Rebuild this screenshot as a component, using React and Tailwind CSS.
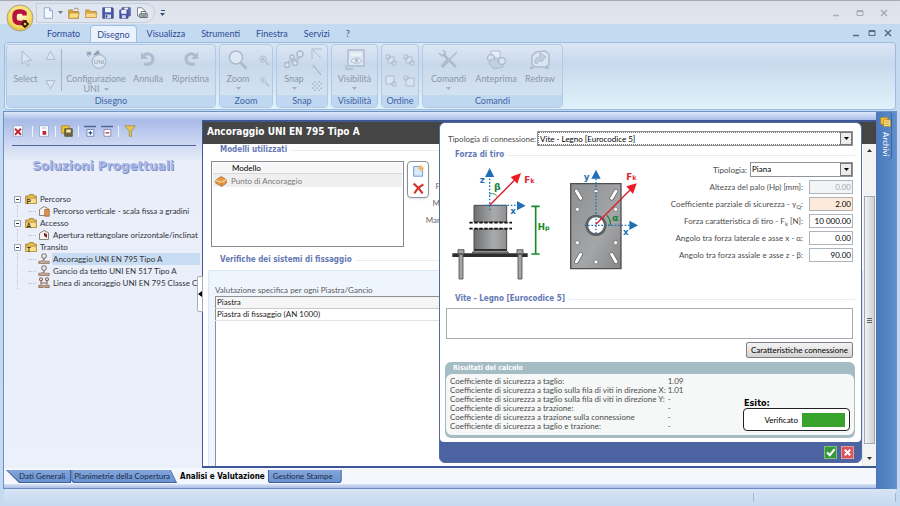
import { useState } from 'react';
import clsx from 'clsx';

const MENU = ['Formato', 'Disegno', 'Visualizza', 'Strumenti', 'Finestra', 'Servizi', '?'];

const TREE = [
    { name: 'Percorso', letter: 'P', items: [{ name: 'Percorso verticale - scala fissa a gradini', icon: 'stairs' }] },
    { name: 'Accesso', letter: 'A', items: [{ name: 'Apertura rettangolare orizzontale/inclinat', icon: 'hatch' }] },
    {
        name: 'Transito',
        letter: 'T',
        items: [
            { name: 'Ancoraggio UNI EN 795 Tipo A', icon: 'anchor', selected: true },
            { name: 'Gancio da tetto UNI EN 517 Tipo A', icon: 'anchor' },
            { name: 'Linea di ancoraggio UNI EN 795 Classe C', icon: 'line' },
        ],
    },
];

const FIELDS = [
    { id: 'hp', label: 'Altezza del palo (Hp) [mm]:', value: '0.00', disabled: true },
    { id: 'gamma', label: <>Coefficiente parziale di sicurezza - γ<sub>Q</sub>:</>, value: '2.00', highlight: true },
    { id: 'fk', label: <>Forza caratteristica di tiro - F<sub>k</sub> [N]:</>, value: '10 000.00' },
    { id: 'alpha', label: 'Angolo tra forza laterale e asse x - α:', value: '0.00' },
    { id: 'beta', label: 'Angolo tra forza assiale e asse z - β:', value: '90.00' },
];

const RESULTS = [
    ['Coefficiente di sicurezza a taglio:', '1.09'],
    ['Coefficiente di sicurezza a taglio sulla fila di viti in direzione X:', '1.01'],
    ['Coefficiente di sicurezza a taglio sulla fila di viti in direzione Y:', '-'],
    ['Coefficiente di sicurezza a trazione:', '-'],
    ['Coefficiente di sicurezza a trazione sulla connessione', '-'],
    ['Coefficiente di sicurezza a taglio e trazione:', '-'],
];

/* ---------- icons ---------- */

const Svg = ({ size = 12, box = 16, children, className }) => (
    <svg width={size} height={size} viewBox={`0 0 ${box} ${box}`} fill="none" className={clsx('shrink-0', className)} aria-hidden="true">
        {children}
    </svg>
);

const NewDoc = () => (
    <Svg>
        <path d="M3 1h7l4 4v10H3z" fill="#f4f8ff" stroke="#7f97c4" />
        <path d="M10 1v4h4" fill="#c6d6f0" stroke="#7f97c4" />
    </Svg>
);

const OpenFolder = () => (
    <Svg>
        <path d="M1 4h5l1 2h7v9H1z" fill="#d9a83c" stroke="#a67c2c" />
        <path d="M2 8h13l-2 7H1z" fill="#fbdc84" stroke="#b98d33" />
        <path d="M8 3c2-2 5-2 6 1" stroke="#9a7b3a" strokeWidth="1.2" />
    </Svg>
);

const Folder = () => (
    <Svg>
        <path d="M1 4h5l1 2h8v8H1z" fill="#e3ac45" stroke="#ad8130" />
        <path d="M1 8h14v6H1z" fill="#fbd98a" stroke="#c49a45" />
    </Svg>
);

const Save = () => (
    <Svg>
        <path d="M1 1h13l1 1v13H1z" fill="#4a58a8" stroke="#3a4688" />
        <path d="M4 1h8v6H4z" fill="#eef1fb" />
        <path d="M4 10h8v5H4z" fill="#d4daee" />
        <path d="M5 11h2v3H5z" fill="#2a3478" />
    </Svg>
);

const SaveAll = () => (
    <Svg>
        <path d="M4 1h11v11H4z" fill="#6673bb" stroke="#3a4688" />
        <path d="M7 1h5v4H7z" fill="#eef1fb" />
        <path d="M1 4h11v11H1z" fill="#4a58a8" stroke="#3a4688" />
        <path d="M3 4h7v5H3z" fill="#eef1fb" />
        <path d="M4 11h5v4H4z" fill="#d4daee" />
    </Svg>
);

const PrintPreview = () => (
    <Svg>
        <path d="M2 1h6l3 3v8H2z" fill="#fff" stroke="#5b6372" />
        <path d="M5 9h10v5H5z" fill="#c5ccd6" stroke="#434a56" />
        <path d="M7 6h6v3H7z" fill="#fff" stroke="#434a56" />
        <path d="M7 12h6" stroke="#2b7a35" strokeWidth="1.4" />
    </Svg>
);

const G = '#adbbcf';
const L = '#dbe5f1';

const CursorIcon = () => (
    <Svg size={20} box={20}>
        <path d="M6 2v13l3.4-3 2 5 2-1-2-4.700h4.600z" fill={L} stroke={G} />
    </Svg>
);

const UniIcon = () => (
    <svg width="24" height="20" viewBox="0 0 24 20" fill="none" aria-hidden="true">
        <path d="M3 3h4v3H3zM5 8l-2-2M9 6l5-5 3 6" fill="#8d9bb0" stroke={G} />
        <circle cx="15" cy="12.500" r="6.800" fill={L} stroke={G} strokeWidth="1.2" />
        <text x="15" y="15" textAnchor="middle" fontSize="6" fontFamily="Liberation Sans, sans-serif" fill="#8593aa">UNI</text>
    </svg>
);

const UndoIcon = ({ flip }) => (
    <Svg size={20} box={20} className={flip ? '-scale-x-100' : ''}>
        <path d="M5 7c4-4 10-2 10 3s-5 6-9 5" stroke={G} strokeWidth="3" />
        <path d="M3 3v7h7z" fill={G} />
    </Svg>
);

const LensIcon = () => (
    <Svg size={22} box={22}>
        <circle cx="9" cy="8.500" r="6.500" fill="#dfe9f5" stroke={G} strokeWidth="1.600" />
        <path d="M13.500 13.500l6 6" stroke={G} strokeWidth="3" />
    </Svg>
);

const SmallLens = ({ dashed }) => (
    <Svg size={12} box={12}>
        <circle cx="5" cy="5" r="3" stroke={G} strokeDasharray={dashed ? '1.500 1.500' : undefined} />
        <path d="M3.500 5h3M5 3.500v3M7.500 7.500l3.500 3.500" stroke={G} strokeWidth="1.400" />
    </Svg>
);

const SnapIcon = () => (
    <Svg size={22} box={22}>
        <path d="M5 15L9 9l3 4 6-8" stroke={G} strokeWidth="3" />
        <path d="M5 15L9 9l3 4 6-8" stroke={L} />
        <circle cx="4" cy="16" r="2.500" fill={L} stroke={G} strokeWidth="1.500" />
        <circle cx="12" cy="14" r="2.500" fill={L} stroke={G} strokeWidth="1.500" />
        <circle cx="17" cy="5" r="3" fill={L} stroke={G} strokeWidth="1.500" />
        <circle cx="9" cy="8" r="2" fill={L} stroke={G} strokeWidth="1.500" />
    </Svg>
);

const SnapCorner = () => (
    <Svg size={12} box={12}><path d="M1 11V1h10M2 2l8 8" stroke={G} /></Svg>
);
const SnapLine = () => (
    <Svg size={12} box={12}><path d="M2 1l8 10" stroke={G} strokeWidth="1.400" /><path d="M1 3l1 1M10 6l1 1M3 9l1 1" stroke={G} /></Svg>
);
const SnapGrid = () => (
    <Svg size={12} box={12}><path d="M1 3l8 8M1 7l4 4M3 1l8 8M7 1l4 4M3 11l8-8M7 11l4-4M1 9l8-8M1 5l4-4" stroke={G} strokeDasharray="1.500 1" /></Svg>
);

const EyeIcon = () => (
    <Svg size={22} box={22}>
        <path d="M4 1h16v16H4z" fill="#dbe6f2" stroke={G} strokeWidth="1.400" />
        <path d="M7 4h10v3H7z" fill="#e8f0f8" />
        <path d="M7 12c3-4 8-4 11 0-3 3-8 3-11 0z" fill="#e8f0f8" stroke={G} />
        <circle cx="12.500" cy="11.500" r="1.800" fill={G} />
        <path d="M2 16v4h7" stroke={G} strokeWidth="1.400" />
    </Svg>
);

const OrderIcon = ({ kind }) => (
    <Svg size={12} box={12}>
        {kind === 0 && <path d="M7 7h4v4H7zM1 1h4v4H1zM3 3h6v6H3z" fill={L} stroke={G} />}
        {kind === 1 && <path d="M3 3h6v6H3zM1 1h4v4H1zM7 7h4v4H7z" fill={L} stroke={G} />}
        {kind === 2 && <path d="M7 7h4v4H7zM1 1h8v8H1z" fill={L} stroke={G} />}
        {kind === 3 && <path d="M1 1h4v4H1zM3 3h8v8H3z" fill={L} stroke={G} />}
    </Svg>
);

const ToolsIcon = () => (
    <Svg size={22} box={22}>
        <path d="M5 5l13 13" stroke={G} strokeWidth="2.500" />
        <path d="M1 4l3 3 3-1 0-3-2-2" stroke={G} strokeWidth="1.500" />
        <path d="M19 3L10 12" stroke={G} strokeWidth="1.500" />
        <path d="M10 11l-6 7" stroke={G} strokeWidth="3.500" />
    </Svg>
);

const PreviewIcon = () => (
    <Svg size={22} box={22}>
        <path d="M6 2h9v7H6z" fill="#e8eef6" stroke={G} />
        <circle cx="6" cy="9" r="3.500" fill={L} stroke={G} strokeWidth="1.500" />
        <path d="M6 10l12 2v6l-9 2-5-5z" fill="#c4d0e0" stroke={G} />
        <circle cx="17" cy="12" r="3.500" fill={L} stroke={G} strokeWidth="1.500" />
    </Svg>
);

const RedrawIcon = () => (
    <Svg size={22} box={22}>
        <path d="M7 3l9-1 4 3v11l-4 2H5l-2-3V7z" fill={L} stroke={G} strokeWidth="1.500" />
        <path d="M6 14c0-5 3-6 5-6V4l6 4-5 5v-2c-2 0-3 1-4 4z" fill="#c4d0e0" stroke={G} />
        <path d="M1 19h3M16 19h4" stroke={G} strokeWidth="2" />
    </Svg>
);

const FolderNode = ({ letter }) => (
    <Svg size={12}>
        <path d="M1 4h4l1-2h5l1 2h3v10H1z" fill="#e7bc4f" stroke="#94702a" />
        <path d="M1 7h14v7H1z" fill="#fbe38f" stroke="#b28c39" />
        <text x="5" y="14" textAnchor="middle" fontSize="9" fontWeight="700" fontFamily="Liberation Sans, sans-serif" fill="#4b350c">{letter}</text>
    </Svg>
);

const NodeIcon = ({ kind }) => {
    if (kind === 'anchor') {
        return (
            <Svg size={12}>
                <circle cx="8" cy="4" r="3" stroke="#8b807d" strokeWidth="1.500" />
                <path d="M8 7v3" stroke="#8b807d" strokeWidth="2" />
                <path d="M1 11h3l1-1h3l1 1h6v3H1z" fill="#c9a58d" stroke="#8a7469" />
            </Svg>
        );
    }
    if (kind === 'line') {
        return (
            <Svg size={12}>
                <circle cx="4" cy="3" r="2" stroke="#846052" strokeWidth="1.500" />
                <circle cx="12" cy="3" r="2" stroke="#846052" strokeWidth="1.500" />
                <path d="M4 5v5M12 5v5M4 8h8" stroke="#846052" strokeWidth="1.400" />
                <path d="M1 11h6v3H1zM9 11h6v3H9z" fill="#d0a78e" stroke="#846052" />
            </Svg>
        );
    }
    return (
        <Svg size={12}>
            <path d="M2 6l6-4 6 3v9H2z" fill="#f6f4f2" stroke="#8c7f79" strokeWidth="1.300" />
            {kind === 'stairs'
                ? <path d="M9 6h6v9H9z" fill="#dc9350" stroke="#a2602a" />
                : <path d="M8 5l4 2v5l-4-3z" fill="#7b2420" />}
        </Svg>
    );
};

const Caret = ({ className }) => (
    <svg width="5" height="3" viewBox="0 0 5 3" className={className} aria-hidden="true"><path d="M0 0h5L2.500 3z" fill="currentColor" /></svg>
);

/* ---------- ribbon ---------- */

const RibbonGroup = ({ title, className, children }) => (
    <section className={clsx('flex flex-col rounded-sm border border-[#b0c9e6] bg-linear-to-b from-[#dde7f4] via-[#c9d9ec] via-30% to-[#d6e6f4]', className)}>
        <div className="flex flex-1 items-stretch">{children}</div>
        <h2 className="h-3 bg-[#bfd7f0] text-center text-[9px] leading-3 text-[#3f63a3]">{title}</h2>
    </section>
);

const RibbonButton = ({ icon, label, caret, className }) => (
    <button type="button" className={clsx('flex flex-col items-center pt-1 text-[9px] leading-[10px] text-[#8c97a8]', className)}>
        <span className="flex h-[25px] items-start justify-center">{icon}</span>
        <span className="whitespace-pre-line">{label}{caret === 'inline' && <Caret className="mb-px ml-1 inline text-[#a3afc0]" />}</span>
        {caret === true && <Caret className="mt-[3px] text-[#a3afc0]" />}
    </button>
);

const Ribbon = () => (
    <div className="mx-1 flex h-[68px] shrink-0 gap-[3px] rounded-sm border border-[#9dbbe0] bg-linear-to-b from-[#dbe6f4] via-[#c8d9ed] via-30% to-[#e0f2fa] p-px">
        <RibbonGroup title="Disegno" className="w-[210px]">
            <RibbonButton icon={<CursorIcon />} label="Select" className="w-[37px]" />
            <div className="flex w-3 flex-col items-center justify-between py-[5px]">
                <Svg size={11} box={11}><path d="M5.500 1l4.500 8.500H1z" fill={L} stroke={G} /></Svg>
                <Svg size={11} box={11}><path d="M5.500 10L10 1.500H1z" fill={L} stroke={G} /></Svg>
            </div>
            <div className="my-1 ml-[5px] w-px bg-[#a7b4c6]" />
            <RibbonButton icon={<UniIcon />} label={'Configurazione\nUNI'} caret="inline" className="w-[68px]" />
            <RibbonButton icon={<UndoIcon />} label="Annulla" className="w-9" />
            <RibbonButton icon={<UndoIcon flip />} label="Ripristina" className="w-[49px]" />
        </RibbonGroup>
        <RibbonGroup title="Zoom" className="w-[54px]">
            <RibbonButton icon={<LensIcon />} label="Zoom" caret className="w-9" />
            <div className="flex w-4 flex-col items-center justify-around py-1"><SmallLens /><SmallLens dashed /></div>
        </RibbonGroup>
        <RibbonGroup title="Snap" className="w-[52px]">
            <RibbonButton icon={<SnapIcon />} label="Snap" caret className="w-[34px]" />
            <div className="flex w-3 flex-col items-center justify-between py-[3px]"><SnapCorner /><SnapLine /><SnapGrid /></div>
        </RibbonGroup>
        <RibbonGroup title="Visibilità" className="w-[47px]">
            <RibbonButton icon={<EyeIcon />} label="Visibilità" caret className="w-full" />
        </RibbonGroup>
        <RibbonGroup title="Ordine" className="w-[38px]">
            <div className="grid flex-1 grid-cols-2 place-items-center py-1">
                {[0, 1, 2, 3].map((k) => <OrderIcon key={k} kind={k} />)}
            </div>
        </RibbonGroup>
        <RibbonGroup title="Comandi" className="w-[141px]">
            <RibbonButton icon={<ToolsIcon />} label="Comandi" caret className="w-[51px]" />
            <RibbonButton icon={<PreviewIcon />} label="Anteprima" className="w-11" />
            <RibbonButton icon={<RedrawIcon />} label="Redraw" className="w-11" />
        </RibbonGroup>
    </div>
);

const WindowButtons = ({ className, gap }) => (
    <div className={clsx('flex items-center', gap, className)}>
        <button type="button" aria-label="Riduci"><Svg size={8} box={8}><path d="M1 6.500h6" stroke="currentColor" strokeWidth="1.500" /></Svg></button>
        <button type="button" aria-label="Ripristina finestra"><Svg size={8} box={8}><path d="M1 2h6v4.500H1z" stroke="currentColor" /><path d="M1 2h6" stroke="currentColor" strokeWidth="2" /></Svg></button>
        <button type="button" aria-label="Chiudi"><Svg size={8} box={8}><path d="M1 1l6 6M7 1L1 7" stroke="currentColor" strokeWidth="1.600" /></Svg></button>
    </div>
);

const TopBar = () => (
    <header className="relative shrink-0">
        <div className="flex h-6 items-center justify-between border-t border-[#a3adba] bg-linear-to-b from-[#dde2ea] to-[#e1e6ee] pr-3">
            <div className="ml-9 flex h-5 items-center gap-[5px] rounded-r-full border border-[#c5cedc] bg-[#dfe6f0] pr-[6px] pl-[5px]">
                <button type="button" aria-label="Nuovo" className="flex items-center gap-1 text-[#6b7688]"><NewDoc /><Caret /></button>
                <button type="button" aria-label="Apri"><OpenFolder /></button>
                <button type="button" aria-label="Cartella"><Folder /></button>
                <button type="button" aria-label="Salva"><Save /></button>
                <button type="button" aria-label="Salva tutto"><SaveAll /></button>
                <button type="button" aria-label="Anteprima di stampa"><PrintPreview /></button>
            </div>
            <button type="button" aria-label="Personalizza" className="mr-auto ml-[5px] flex flex-col items-center gap-[2px] text-[#35517f]">
                <span className="h-px w-1 bg-current" /><Caret />
            </button>
            <WindowButtons className="text-[#a4adb9]" gap="gap-4" />
        </div>
        <div className="flex h-[18px] items-end justify-between bg-[#c3daf1] pr-2">
            <nav className="ml-[39px] flex items-end text-[9px] leading-[17px] text-[#2f4c94]">
                {MENU.map((m) => (
                    <a
                        key={m}
                        href="#"
                        className={clsx(
                            'block h-[17px]',
                            m === 'Disegno' ? 'mx-[2px] rounded-t-sm border border-b-0 border-[#9fbde2] bg-[#eaf2fc] px-[6px]' : 'px-2'
                        )}
                    >
                        {m}
                    </a>
                ))}
            </nav>
            <WindowButtons className="h-full text-[#5c6b84]" gap="gap-2" />
        </div>
        <button type="button" aria-label="Menu applicazione" className="absolute top-1 left-[6px]">
            <svg width="28" height="28" viewBox="0 0 28 28" aria-hidden="true">
                <defs>
                    <radialGradient id="orb" cx="0.5" cy="0.4" r="0.6">
                        <stop offset="0" stopColor="#fffbd8" />
                        <stop offset="0.7" stopColor="#f7dc5e" />
                        <stop offset="1" stopColor="#dcb949" />
                    </radialGradient>
                </defs>
                <circle cx="14" cy="14" r="13" fill="url(#orb)" stroke="#a9a48c" />
                <path d="M18.500 11.500V9q-1-1.500-3.500-1.500h-2Q8.500 7.500 8.500 12v2q0 5 5 5h2q3 0 3.500-3" fill="none" stroke="#b5133c" strokeWidth="4.500" />
                <circle cx="19" cy="20" r="2.200" fill="#f2d24c" stroke="#3b1a12" strokeWidth="1.800" />
                <path d="M15 20h2M21 20h2M19 16v2M19 22v2" stroke="#3b1a12" strokeWidth="1.500" />
            </svg>
        </button>
    </header>
);

/* ---------- left panel ---------- */

const Sep = () => <span className="h-[11px] w-px bg-[#f1f5fd]" />;

const Toolbar = () => (
    <div className="ml-[6px] mr-[4px] box-content flex h-[18px] items-center gap-[5px] border-b border-[#4f6494] pb-[5px]">
        <button type="button" aria-label="Elimina" className="mr-[3px]"><Svg><path d="M2 1h12v14H2z" fill="#fff" stroke="#8ea0c4" /><path d="M4 5l8 8M12 5l-8 8" stroke="#c2202c" strokeWidth="2.400" /></Svg></button>
        <Sep />
        <button type="button" aria-label="Nuovo elemento"><Svg><path d="M2 1h12v14H2z" fill="#fff" stroke="#8ea0c4" /><path d="M6 8h5v5H6z" fill="#b92a33" /><path d="M5 4h6" stroke="#8ea0c4" /></Svg></button>
        <Sep />
        <button type="button" aria-label="Archivia"><Svg><path d="M1 1h10v10H1z" fill="#f1c63f" stroke="#a17b1c" /><path d="M5 5h10v10H5z" fill="#6f6746" stroke="#49421f" /><path d="M7 6h6v4H7z" fill="#f7e9a6" /></Svg></button>
        <Sep />
        <button type="button" aria-label="Espandi"><Svg><path d="M0 2h16" stroke="#51659a" strokeWidth="2" /><path d="M4 6h9v9H4z" fill="#fff" stroke="#5a70a8" /><path d="M6 10.500h5M8.500 8v5" stroke="#27408c" strokeWidth="1.400" /></Svg></button>
        <button type="button" aria-label="Comprimi"><Svg><path d="M0 2h16" stroke="#51659a" strokeWidth="2" /><path d="M4 6h9v9H4z" fill="#fff" stroke="#8a6f98" /><path d="M6 10.500h5" stroke="#a02c3c" strokeWidth="1.600" /></Svg></button>
        <Sep />
        <button type="button" aria-label="Filtra"><Svg><path d="M1 1h14L10 8v7H7V8z" fill="#e5c451" stroke="#a08a45" /></Svg></button>
    </div>
);

const SidePanel = () => (
    <aside className="w-[198px] shrink-0 overflow-hidden bg-linear-to-b from-[#a9bbe8] via-[#e9eef9] via-12% to-[#ebf0fa] px-[2px] pt-[2px]">
        <Toolbar />
        <h1 className="mt-3 text-center font-[DejaVu_Sans,sans-serif] text-[12px] leading-4 font-bold text-[#a9b8e6] [text-shadow:1px_1px_0_#7c8cc4]">
            Soluzioni Progettuali
        </h1>
        <ul className="mt-[19px] ml-2 text-[8px] leading-3 text-[#2f333b]">
            {TREE.map((node) => (
                <li key={node.name}>
                    <div className="flex items-center gap-[3px]">
                        <Svg size={7} box={7} className="mr-px"><path d="M.5.5h6v6h-6z" fill="#fff" stroke="#98a3b8" /><path d="M2 3.500h3" stroke="#333" /></Svg>
                        <FolderNode letter={node.letter} />
                        {node.name}
                    </div>
                    <ul className="ml-[3px] border-l border-dotted border-[#b9c1d2]">
                        {node.items.map((it) => (
                            <li key={it.name} className="flex items-center">
                                <span className="mr-[2px] ml-[10px] w-2 border-t border-dotted border-[#b9c1d2]" />
                                <NodeIcon kind={it.icon} />
                                <a href="#" className={clsx('ml-[2px] flex-1 pl-px whitespace-nowrap', it.selected && 'bg-[#c9ddf2]')}>{it.name}</a>
                            </li>
                        ))}
                    </ul>
                </li>
            ))}
        </ul>
    </aside>
);

/* ---------- main document ---------- */

const GroupTitle = ({ children, className }) => (
    <h3 className={clsx('flex items-center gap-1 font-[DejaVu_Sans_Condensed,sans-serif] text-[8px] leading-3 font-bold whitespace-nowrap text-[#6478b4]', className)}>
        {children}
        <span className="h-px flex-1 bg-[#e6ebf4]" />
    </h3>
);

const Document = () => (
    <div className="flex min-h-0 flex-1 flex-col overflow-hidden bg-white text-[8px]">
        <GroupTitle className="ml-[17px]">Modelli utilizzati</GroupTitle>
        <div className="mt-[5px] ml-2 flex items-start gap-[3px]">
            <div className="h-[86px] w-[193px] border border-[#858a92] bg-white p-px">
                <div className="h-[11px] border-b border-[#d8d8d8] bg-[#f7f7f7] pl-[19px] leading-[11px] text-black">Modello</div>
                <div className="flex h-[13px] items-center gap-1 bg-[#efefef] pl-[2px] text-[#7a7a7a]">
                    <Svg><path d="M1 7l7-5 7 4v5l-6 4-8-4z" fill="#e99a45" stroke="#a5652b" /><path d="M1 7l8 3 6-4" stroke="#fbd9a0" strokeWidth="1.400" /><path d="M9 10v5" stroke="#a5652b" /></Svg>
                    Punto di Ancoraggio
                </div>
            </div>
            <div className="flex h-[37px] w-[22px] flex-col items-center justify-around rounded-sm border border-[#8a8f98] bg-white shadow">
                <button type="button" aria-label="Aggiungi modello"><Svg size={13}><path d="M2 3h8l3 3v9H2z" fill="#dbe8fb" stroke="#5e86c4" /><path d="M11 1v8M7 5h8M8.500 2.500l5 5M13.500 2.500l-5 5" stroke="#eeb13c" strokeWidth="1.200" /></Svg></button>
                <button type="button" aria-label="Rimuovi modello"><Svg size={13}><path d="M2 2c4 3 8 7 11 12M14 3C9 6 5 10 3 14" stroke="#d2312b" strokeWidth="2.600" /></Svg></button>
            </div>
            <div className="-ml-[5px] flex w-[13px] flex-col items-end gap-[5px] pt-[19px] leading-3 text-[#666]">
                <span>F</span><span>M</span><span>Mar</span>
            </div>
        </div>
        <GroupTitle className="mt-[7px] ml-[17px]">Verifiche dei sistemi di fissaggio</GroupTitle>
        <div className="mt-1 ml-[5px] flex flex-1 flex-col border border-b-0 border-[#dce7f5] bg-[#eff5fc] pt-[13px] pl-[6px]">
            <p className="leading-3 text-[#5c5c5c]">Valutazione specifica per ogni Piastra/Gancio</p>
            <table className="w-full border-t border-l border-[#8b9099] bg-white text-left leading-[11px] text-[#222]">
                <thead><tr><th className="border-b border-[#c9c9c9] bg-[#f5f5f5] pl-px font-normal">Piastra</th></tr></thead>
                <tbody><tr><td className="border-b border-[#e2e2e2] pl-px">Piastra di fissaggio (AN 1000)</td></tr></tbody>
            </table>
            <div className="flex-1 border-l border-[#8b9099] bg-white" />
        </div>
    </div>
);

const ForceDiagram = () => (
    <svg width="210" height="120" viewBox="36 141 630 360" className="mt-[2px] shrink-0" role="img" aria-label="Schema delle forze">
        <defs>
            <linearGradient id="steel" x1="0" x2="1"><stop offset="0" stopColor="#6f7072" /><stop offset="0.6" stopColor="#a9aaac" /><stop offset="1" stopColor="#8f9092" /></linearGradient>
            <linearGradient id="plate" x1="0" x2="1" y2="1"><stop offset="0" stopColor="#8d8e90" /><stop offset="0.6" stopColor="#a5a6a8" /><stop offset="1" stopColor="#858688" /></linearGradient>
        </defs>
        {/* post, side view */}
        <path d="M120 265h98v50h-98zM120 336h98v62h-98z" fill="url(#steel)" stroke="#48494b" strokeWidth="3" />
        <path d="M106 317h128M106 335h128" stroke="#111" strokeWidth="5" strokeDasharray="10 5" />
        <path d="M122 398h94l8 10H114z" fill="#8d8e90" stroke="#333" strokeWidth="2" />
        <path d="M120 399h98" stroke="#222" strokeWidth="4" />
        <path d="M55 409h226v11H55z" fill="#2c2d2f" />
        <path d="M72 398h18v14H72zM249 398h18v14h-18zM75 410h12v76H75zM252 410h12v76h-12z" fill="#a4a5a7" stroke="#4b4c4e" strokeWidth="2.500" />
        <path d="M167 280V178M150 265h98" stroke="#1f6fb5" strokeWidth="4" strokeDasharray="5 5" />
        <path d="M153 180h28l-14-27zM249 252v28l26-14z" fill="#1f6fb5" />
        <path d="M167 232c8-4 16-3 22 6" stroke="#17853a" strokeWidth="3" fill="none" />
        <path d="M167 265l75-76" stroke="#d81f2a" strokeWidth="4" />
        <path d="M230 180l31-12-11 32z" fill="#ee1c25" />
        <path d="M292 268h25M292 411h25M305 268v143" stroke="#168a2e" strokeWidth="5" />
        {/* plate, top view */}
        <path d="M410 200h151v255H410z" fill="url(#plate)" stroke="#4f5052" strokeWidth="4" />
        <path d="M427 222l13 22M546 222l-13 22M440 412l-13 22M533 412l13 22" stroke="#5f6062" strokeWidth="13" strokeLinecap="round" />
        <path d="M427 222l13 22M546 222l-13 22M440 412l-13 22M533 412l13 22" stroke="#fff" strokeWidth="9" strokeLinecap="round" />
        <g fill="#fff" stroke="#666" strokeWidth="2">
            <circle cx="430" cy="277" r="6" /><circle cx="545" cy="277" r="6" /><circle cx="430" cy="377" r="6" />
            <circle cx="545" cy="377" r="6" /><circle cx="486" cy="435" r="6" /><circle cx="486" cy="223" r="6" />
        </g>
        <circle cx="486" cy="325" r="28" fill="#fff" stroke="#606163" strokeWidth="8" />
        <path d="M486 350V184M452 325h134" stroke="#1f6fb5" strokeWidth="4" strokeDasharray="5 5" />
        <path d="M472 185h28l-14-27zM586 311v28l26-14z" fill="#1f6fb5" />
        <path d="M519 295c8 9 11 18 10 30" stroke="#17853a" strokeWidth="4" fill="none" />
        <path d="M486 322l105-106" stroke="#d81f2a" strokeWidth="4" />
        <path d="M577 208l31-9-11 32z" fill="#ee1c25" />
        <g fontFamily="DejaVu Sans, sans-serif" fontWeight="700" fontSize="26">
            <text x="137" y="198" fill="#1f6fb5">z</text>
            <text x="229" y="291" fill="#1f6fb5">x</text>
            <text x="449" y="190" fill="#1f6fb5">y</text>
            <text x="567" y="355" fill="#1f6fb5">x</text>
            <text x="180" y="220" fill="#17853a" fontSize="28">β</text>
            <text x="534" y="312" fill="#17853a" fontSize="28">α</text>
            <text x="271" y="199" fill="#e02530">F<tspan fontSize="19">k</tspan></text>
            <text x="577" y="188" fill="#e02530">F<tspan fontSize="19">k</tspan></text>
            <text x="311" y="340" fill="#168a2e">H<tspan fontSize="19">p</tspan></text>
        </g>
    </svg>
);

const Select = ({ id, value, className, focused }) => (
    <div className={clsx('relative h-[15px] border border-[#8f949c] bg-white', className)}>
        <select id={id} className={clsx('h-full w-full appearance-none pr-3 pl-px text-[8px] leading-[13px] text-black outline-none', focused && 'border border-dotted border-[#777] leading-[11px]')}>
            <option>{value}</option>
        </select>
        <span className="pointer-events-none absolute inset-y-0 right-0 flex w-3 items-center justify-center border border-[#777] bg-[#ececec] text-black"><Caret /></span>
    </div>
);

const ConnectionDialog = () => {
    const [values, setValues] = useState(() => Object.fromEntries(FIELDS.map((f) => [f.id, f.value])));

    return (
        <div className="absolute top-0 right-[14px] left-[236px] flex flex-col overflow-hidden rounded-md border border-[#5569a3] bg-[#4b63a1] text-[8px] text-[#4c4c4c]">
            <div className="rounded-b bg-white px-[6px] pt-2">
                <div className="flex items-center gap-px pr-[2px] pl-[2px]">
                    <label htmlFor="conn">Tipologia di connessione:</label>
                    <Select id="conn" value="Vite - Legno [Eurocodice 5]" className="flex-1" focused />
                </div>
                <GroupTitle className="mt-[3px] ml-[9px]">Forza di tiro</GroupTitle>
                <div className="mt-px flex h-[131px] items-start justify-between pr-[2px]">
                    <ForceDiagram />
                    <div className="-ml-5 flex flex-1 flex-col items-end gap-[3px]">
                        <div className="flex items-center gap-[3px]">
                            <label htmlFor="tipo">Tipologia:</label>
                            <Select id="tipo" value="Piana" className="w-[103px]" />
                        </div>
                        {FIELDS.map((f) => (
                            <div key={f.id} className="flex items-center gap-[6px]">
                                <label htmlFor={f.id} className="whitespace-nowrap">{f.label}</label>
                                <input
                                    id={f.id}
                                    value={values[f.id]}
                                    disabled={f.disabled}
                                    onChange={(e) => setValues({ ...values, [f.id]: e.target.value })}
                                    className={clsx(
                                        'h-[14px] w-11 border border-[#b0b4ba] pr-px text-right',
                                        f.disabled ? 'bg-[#f3f4f6] text-[#a5a9b0]' : 'text-black',
                                        f.highlight && 'bg-[#fdeadb]'
                                    )}
                                />
                            </div>
                        ))}
                    </div>
                </div>
                <GroupTitle className="ml-[9px]">Vite - Legno [Eurocodice 5]</GroupTitle>
                <textarea aria-label="Vite - Legno" className="mt-[3px] mr-[2px] block h-[31px] w-[calc(100%-2px)] resize-none border border-[#a8acb2]" />
                <div className="mt-[3px] mr-[2px] flex justify-end">
                    <button type="button" className="h-4 rounded-xs border border-[#7c7f84] bg-linear-to-b from-[#f4f4f4] to-[#d3d3d3] px-1 leading-3 text-black">Caratteristiche connessione</button>
                </div>
                <section className="mt-1 -ml-px rounded-md bg-[#a6bcc4] px-px pb-[3px]">
                    <h3 className="h-3 pl-[7px] font-[DejaVu_Sans_Condensed,sans-serif] text-[7px] leading-3 font-bold text-white">Risultati del calcolo</h3>
                    <div className="flex items-end justify-between rounded-md bg-[#f6f7f7] pt-[3px] pr-1 pb-1 pl-1">
                        <table className="text-left leading-[9px]">
                            <tbody>
                                {RESULTS.map(([label, value]) => (
                                    <tr key={label}><th className="pr-[2px] font-normal whitespace-nowrap">{label}</th><td>{value}</td></tr>
                                ))}
                            </tbody>
                        </table>
                        <div>
                            <p className="pl-px font-[DejaVu_Sans_Condensed,sans-serif] text-[9px] leading-[10px] font-bold text-black">Esito:</p>
                            <div className="flex h-[23px] w-[107px] items-center justify-end gap-1 rounded-sm border border-[#222] bg-white pr-1 text-black">
                                Verificato
                                <span className="h-[14px] w-[43px] bg-[#37a32c]" />
                            </div>
                        </div>
                    </div>
                </section>
                <div className="h-1" />
            </div>
            <div className="flex h-5 items-center justify-end gap-1 pr-[7px]">
                <button type="button" aria-label="Conferma" className="border border-[#7fc07b] bg-[#38963a]"><Svg size={11}><path d="M3 8l4 4 7-9" stroke="#fff" strokeWidth="3" /></Svg></button>
                <button type="button" aria-label="Annulla modifiche" className="border border-[#ea9a9e] bg-[#d9555c]"><Svg size={11}><path d="M4 4l8 8M12 4l-8 8" stroke="#fff" strokeWidth="3" /></Svg></button>
            </div>
        </div>
    );
};

const Scrollbar = () => (
    <div className="flex w-[13px] shrink-0 flex-col items-center bg-[#f3f3f4] text-[#333]">
        <span className="flex h-3 items-center"><Caret className="rotate-180" /></span>
        <div className="mt-10 flex w-[11px] flex-1 flex-col items-center justify-center gap-px border border-[#a5a8ad] bg-linear-to-r from-[#f3f3f3] to-[#cfd0d3]">
            <span className="h-px w-[5px] bg-[#666]" /><span className="h-px w-[5px] bg-[#666]" /><span className="h-px w-[5px] bg-[#666]" />
        </div>
        <span className="flex h-[22px] items-center pt-[6px]"><Caret /></span>
    </div>
);

/* ---------- page tabs ---------- */

const PAGE_TABS = [
    { name: 'Dati Generali', shape: '[clip-path:polygon(0_0,100%_0,100%_100%,20%_100%)]', pad: 'pl-3 pr-[5px]' },
    { name: 'Planimetrie della Copertura', shape: '[clip-path:polygon(0_0,94%_0,100%_100%,2%_100%,0_85%)]', pad: 'pl-[2px] pr-[6px]' },
    { name: 'Analisi e Valutazione', active: true },
    { name: 'Gestione Stampe', shape: '[clip-path:polygon(0_0,100%_0,100%_85%,98%_100%,2%_100%,0_85%)]', pad: 'pl-1 pr-2' },
];

const PageTabs = () => (
    <div className="flex h-4 shrink-0 bg-[#f4f7fd] pt-[2px] pl-[2px] text-[8px] leading-3">
        {PAGE_TABS.map((t) => t.active ? (
            <button key={t.name} type="button" className="px-[3px] font-[DejaVu_Sans_Condensed,sans-serif] font-bold text-black">{t.name}</button>
        ) : (
            <button key={t.name} type="button" className={clsx('mb-px bg-[#3f5f9f] p-px pt-0', t.shape)}>
                <span className={clsx('block bg-linear-to-b from-[#83a6da] to-[#6b93cf] text-[#1d2b4a]', t.shape, t.pad)}>{t.name}</span>
            </button>
        ))}
    </div>
);

export default function App() {
    return (
        <div className="flex h-screen min-h-[506px] flex-col overflow-hidden bg-[#c3daf1] font-[Lato,Noto_Sans,sans-serif]">
            <TopBar />
            <Ribbon />
            <div className="mx-[3px] mt-px flex min-h-0 flex-1 border-x border-t border-[#6d8fc4]">
                <div className="flex min-w-0 flex-1 flex-col">
                    <div className="h-2 shrink-0 bg-linear-to-b from-[#dfe8fb] to-[#a9bbe6]" />
                    <div className="flex min-h-0 flex-1">
                        <SidePanel />
                        <main className="relative flex min-w-0 flex-1 flex-col border-t-2 border-b-2 border-l border-[#3d5694]">
                            <h1 className="h-[22px] shrink-0 bg-[#454545] pl-1 font-[DejaVu_Sans_Condensed,sans-serif] text-[10px] leading-5 font-bold text-white">Ancoraggio UNI EN 795 Tipo A</h1>
                            <div className="flex min-h-0 flex-1">
                                <Document />
                                <Scrollbar />
                            </div>
                            <ConnectionDialog />
                            <button type="button" aria-label="Chiudi pannello" className="absolute top-[154px] -left-[6px] flex h-9 w-[6px] items-center justify-center rounded-l-xs border border-[#a8adb8] bg-white text-black">
                                <svg width="4" height="6" viewBox="0 0 4 6"><path d="M4 0v6L0 3z" fill="currentColor" /></svg>
                            </button>
                        </main>
                    </div>
                    <PageTabs />
                    <div className="h-[5px] shrink-0 border-b border-[#6f8abf] bg-linear-to-b from-[#dbe4f7] to-[#aabde4]" />
                </div>
                <div className="w-5 shrink-0 bg-linear-to-r from-[#4a78bb] to-[#5e8ecb]">
                    <button type="button" className="flex w-4 flex-col items-center gap-1 rounded-r-sm border-r border-[#3b659f] py-1 pl-1 text-[8px] leading-[10px] text-white">
                        <Svg><path d="M1 2h9v9H1z" fill="#f3c23c" stroke="#b38720" /><path d="M5 5h9v9H5z" fill="#fbdf85" stroke="#b38720" /><path d="M7 8h5M7 11h5" stroke="#b38720" /></Svg>
                        <span className="[writing-mode:vertical-rl]">Archivi</span>
                    </button>
                </div>
            </div>
            <footer className="mx-1 flex h-[17px] shrink-0 justify-end bg-linear-to-b from-[#d7e5f5] to-[#c5d9ef] py-1">
                <span className="w-[143px] border-x border-[#9fb6d6]" />
            </footer>
        </div>
    );
}
